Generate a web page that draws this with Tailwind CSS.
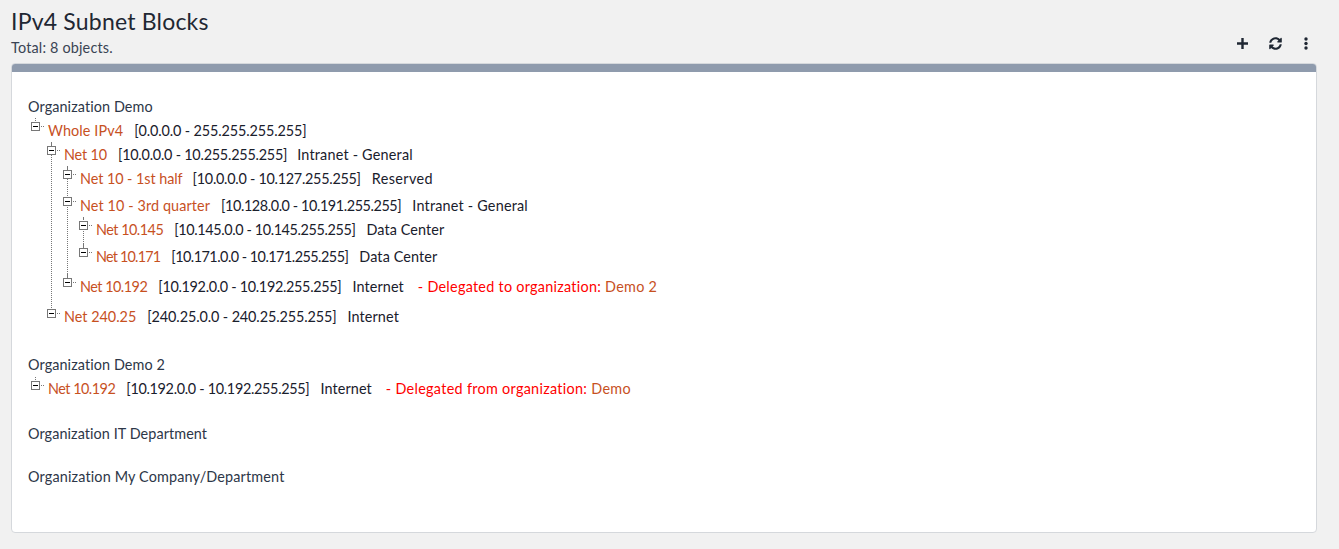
<!DOCTYPE html>
<html lang="en">
<head>
    <meta charset="UTF-8">
    <title>IPv4 Subnet Blocks</title>
    <script src="https://cdn.jsdelivr.net/npm/@tailwindcss/browser@4"></script>
</head>
<body class="bg-[#f1f1f1] text-[#1a202c] font-['Lato',sans-serif] text-[14.4px] leading-[24px] h-[549px] overflow-hidden">

    <!-- Header -->
    <div class="flex justify-between items-start pl-[11px] pr-[31px] pt-[8px] h-[63px]">
        <div>
            <h1 class="text-[23px] leading-[26px] tracking-[0.2px] text-[#1f2733]">IPv4 Subnet Blocks</h1>
            <p class="mt-[3px] leading-[22px] tracking-[0.18px] text-[#3a4454]">Total: 8 objects.</p>
        </div>
        <div class="flex items-center gap-[20px] mt-[29px]">
            <svg class="w-[13px] h-[13px]" viewBox="0 0 13 13"><path d="M6.5 1v11M1 6.5h11" stroke="#1f2733" stroke-width="2.4" fill="none"/></svg>
            <svg class="w-[13px] h-[13px] mr-[2px]" viewBox="0 0 512 512"><path fill="#1f2733" d="M370.7 133.3C339.5 104 298.9 88 255.8 88c-77.5.1-144.3 53.2-162.8 126.9-1.3 5.4-6.1 9.2-11.7 9.2H24.1c-7.5 0-13.2-6.8-11.8-14.2C33.9 94.9 134.8 8 256 8c66.4 0 126.8 26.1 171.3 68.7L463 41c15.1-15.1 41-4.4 41 17v134c0 13.3-10.7 24-24 24H346c-21.4 0-32.1-25.9-17-41l41.7-41.7zM32 296h134c21.4 0 32.1 25.9 17 41l-41.8 41.8c31.3 29.3 71.8 45.3 114.9 45.2 77.4-.1 144.3-53.1 162.8-126.8 1.3-5.4 6.1-9.2 11.7-9.2h57.3c7.5 0 13.2 6.8 11.8 14.2C478.1 417.1 377.2 504 256 504c-66.4 0-126.8-26.1-171.3-68.7L49 471c-15.1 15.1-41 4.4-41-17V320c0-13.3 10.7-24 24-24z"/></svg>
            <svg class="w-[4px] h-[13px]" viewBox="0 0 4 13"><circle cx="2" cy="2" r="1.7" fill="#1f2733"/><circle cx="2" cy="6.5" r="1.7" fill="#1f2733"/><circle cx="2" cy="11" r="1.7" fill="#1f2733"/></svg>
        </div>
    </div>

    <!-- Panel -->
    <div class="ml-[11px] w-[1306px] h-[470px] bg-white border border-[#d5d8dc] rounded-[4px] overflow-hidden">
        <div class="h-[8px] bg-[#8f9bad]"></div>
        <div class="pl-[16px] pt-[23px]">

            <div class="h-[24px] tracking-[0.1px] text-[#2d3748]">Organization Demo</div>
            <ul class="relative">
                <li>
                    <div class="relative flex h-[24px] pl-[20px]">
                        <svg class="absolute left-[1px] top-[-1px]" width="16" height="16" viewBox="0 0 16 16"><path d="M6.5 0v4M12 8.5h3" stroke="#777" stroke-dasharray="1 1" fill="none"/><rect x="2.5" y="4.5" width="8" height="8" fill="#fff" stroke="#777"/><path d="M4 8.5h5" stroke="#000"/></svg>
                        <a class="text-[#c7511f] mr-[11px] tracking-[0.1px]">Whole IPv4</a><span class="mr-[11px] tracking-[-0.11px]">[0.0.0.0 - 255.255.255.255]</span>
                    </div>
                    <ul class="relative pl-[16px]">
                        <span class="absolute left-[23px] top-0 h-[167px] border-l border-dotted border-[#777]"></span>
                        <li>
                            <div class="relative flex h-[24px] pl-[20px]">
                                <svg class="absolute left-[1px] top-[-1px]" width="16" height="16" viewBox="0 0 16 16"><path d="M6.5 0v4M12 8.5h3" stroke="#777" stroke-dasharray="1 1" fill="none"/><rect x="2.5" y="4.5" width="8" height="8" fill="#fff" stroke="#777"/><path d="M4 8.5h5" stroke="#000"/></svg>
                                <a class="text-[#c7511f] mr-[11px] tracking-[-0.15px]">Net 10</a><span class="mr-[10px] tracking-[-0.23px]">[10.0.0.0 - 10.255.255.255]</span><span class="tracking-[0.2px]">Intranet - General</span>
                            </div>
                            <ul class="relative pl-[16px]">
                                <span class="absolute left-[23px] top-0 h-[111px] border-l border-dotted border-[#777]"></span>
                                <li>
                                    <div class="relative flex h-[27px] pl-[20px]">
                                        <svg class="absolute left-[1px] top-[-1px]" width="16" height="16" viewBox="0 0 16 16"><path d="M6.5 0v4M12 8.5h3" stroke="#777" stroke-dasharray="1 1" fill="none"/><rect x="2.5" y="4.5" width="8" height="8" fill="#fff" stroke="#777"/><path d="M4 8.5h5" stroke="#000"/></svg>
                                        <a class="text-[#c7511f] mr-[10px] tracking-[-0.06px]">Net 10 - 1st half</a><span class="mr-[11px] tracking-[-0.27px]">[10.0.0.0 - 10.127.255.255]</span><span class="tracking-[0.4px]">Reserved</span>
                                    </div>
                                </li>
                                <li>
                                    <div class="relative flex h-[24px] pl-[20px]">
                                        <svg class="absolute left-[1px] top-[-1px]" width="16" height="16" viewBox="0 0 16 16"><path d="M6.5 0v4M12 8.5h3" stroke="#777" stroke-dasharray="1 1" fill="none"/><rect x="2.5" y="4.5" width="8" height="8" fill="#fff" stroke="#777"/><path d="M4 8.5h5" stroke="#000"/></svg>
                                        <a class="text-[#c7511f] mr-[11px] tracking-[0.1px]">Net 10 - 3rd quarter</a><span class="mr-[11px] tracking-[-0.41px]">[10.128.0.0 - 10.191.255.255]</span><span class="tracking-[0.2px]">Intranet - General</span>
                                    </div>
                                    <ul class="relative pl-[16px]">
                                        <span class="absolute left-[23px] top-0 h-[30px] border-l border-dotted border-[#777]"></span>
                                        <li>
                                            <div class="relative flex h-[27px] pl-[20px]">
                                                <svg class="absolute left-[1px] top-[-1px]" width="16" height="16" viewBox="0 0 16 16"><path d="M6.5 0v4M12 8.5h3" stroke="#777" stroke-dasharray="1 1" fill="none"/><rect x="2.5" y="4.5" width="8" height="8" fill="#fff" stroke="#777"/><path d="M4 8.5h5" stroke="#000"/></svg>
                                                <a class="text-[#c7511f] mr-[11px] tracking-[-0.5px]">Net 10.145</a><span class="mr-[11px] tracking-[-0.38px]">[10.145.0.0 - 10.145.255.255]</span><span class="tracking-[0.1px]">Data Center</span>
                                            </div>
                                        </li>
                                        <li>
                                            <div class="relative flex h-[30px] pl-[20px]">
                                                <svg class="absolute left-[1px] top-[-1px]" width="16" height="16" viewBox="0 0 16 16"><path d="M6.5 0v4M12 8.5h3" stroke="#777" stroke-dasharray="1 1" fill="none"/><rect x="2.5" y="4.5" width="8" height="8" fill="#fff" stroke="#777"/><path d="M4 8.5h5" stroke="#000"/></svg>
                                                <a class="text-[#c7511f] mr-[11px] tracking-[-0.8px]">Net 10.171</a><span class="mr-[11px] tracking-[-0.52px]">[10.171.0.0 - 10.171.255.255]</span><span class="tracking-[0.1px]">Data Center</span>
                                            </div>
                                        </li>
                                    </ul>
                                </li>
                                <li>
                                    <div class="relative flex h-[30px] pl-[20px]">
                                        <svg class="absolute left-[1px] top-[-1px]" width="16" height="16" viewBox="0 0 16 16"><path d="M6.5 0v4M12 8.5h3" stroke="#777" stroke-dasharray="1 1" fill="none"/><rect x="2.5" y="4.5" width="8" height="8" fill="#fff" stroke="#777"/><path d="M4 8.5h5" stroke="#000"/></svg>
                                        <a class="text-[#c7511f] mr-[11px] tracking-[-0.5px]">Net 10.192</a><span class="mr-[11px] tracking-[-0.31px]">[10.192.0.0 - 10.192.255.255]</span><span class="tracking-[0.1px]">Internet</span>
                                        <span class="ml-[14px] text-[#f00] tracking-[0.27px]">- Delegated to organization: <a class="text-[#c7511f]">Demo 2</a></span>
                                    </div>
                                </li>
                            </ul>
                        </li>
                        <li>
                            <div class="relative flex h-[24px] pl-[20px]">
                                <svg class="absolute left-[1px] top-0" width="16" height="16" viewBox="0 0 16 16"><path d="M6.5 0v4M12 8.5h3" stroke="#777" stroke-dasharray="1 1" fill="none"/><rect x="2.5" y="4.5" width="8" height="8" fill="#fff" stroke="#777"/><path d="M4 8.5h5" stroke="#000"/></svg>
                                <a class="text-[#c7511f] mr-[11px]">Net 240.25</a><span class="mr-[11px] tracking-[-0.1px]">[240.25.0.0 - 240.25.255.255]</span><span class="tracking-[0.1px]">Internet</span>
                            </div>
                        </li>
                    </ul>
                </li>
            </ul>

            <div class="h-[24px] mt-[24px] tracking-[0.1px] text-[#2d3748]">Organization Demo 2</div>
            <div class="relative flex h-[24px] pl-[20px]">
                <svg class="absolute left-[1px] top-0" width="16" height="16" viewBox="0 0 16 16"><path d="M6.5 0v4M12 8.5h3" stroke="#777" stroke-dasharray="1 1" fill="none"/><rect x="2.5" y="4.5" width="8" height="8" fill="#fff" stroke="#777"/><path d="M4 8.5h5" stroke="#000"/></svg>
                <a class="text-[#c7511f] mr-[11px] tracking-[-0.5px]">Net 10.192</a><span class="mr-[11px] tracking-[-0.31px]">[10.192.0.0 - 10.192.255.255]</span><span class="tracking-[0.1px]">Internet</span>
                <span class="ml-[14px] text-[#f00] tracking-[0.3px]">- Delegated from organization: <a class="text-[#c7511f]">Demo</a></span>
            </div>

            <div class="h-[24px] mt-[21px] tracking-[0.08px] text-[#2d3748]">Organization IT Department</div>
            <div class="h-[24px] mt-[19px] tracking-[0.16px] text-[#2d3748]">Organization My Company/Department</div>
        </div>
    </div>
</body>
</html>
